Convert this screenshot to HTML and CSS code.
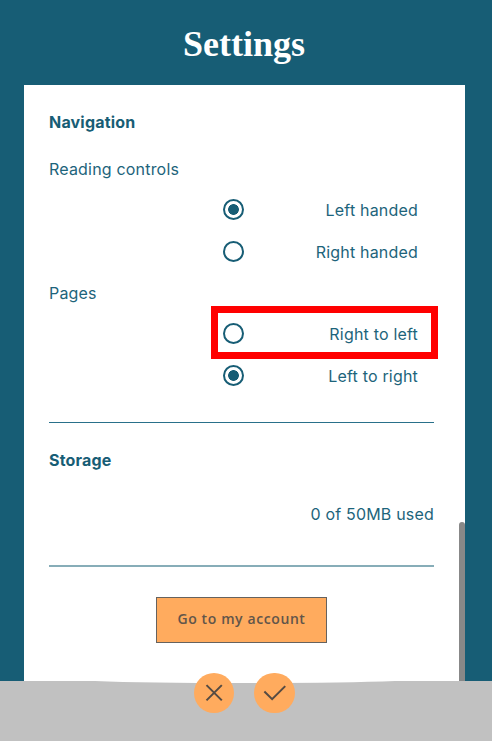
FILE: index.html
```html
<!DOCTYPE html>
<html lang="en">
<head>
<meta charset="utf-8">
<title>Settings</title>
<link rel="stylesheet" href="styles.css">
</head>
<body>
<div class="app">
  <h1 class="title">Settings</h1>
  <main class="panel">
    <h2 class="heading">Navigation</h2>
    <p class="label">Reading controls</p>
    <div class="options">
      <div class="option"><span class="radio checked"></span><span>Left handed</span></div>
      <div class="option"><span class="radio"></span><span>Right handed</span></div>
    </div>
    <p class="label pages">Pages</p>
    <div class="options">
      <div class="option highlighted"><span class="radio"></span><span>Right to left</span></div>
      <div class="option"><span class="radio checked"></span><span>Left to right</span></div>
    </div>
    <div class="rule"></div>
    <h2 class="heading">Storage</h2>
    <p class="usage">0 of 50MB used</p>
    <div class="rule soft"></div>
    <button class="account">Go to my account</button>
    <div class="scrollbar"></div>
  </main>
  <footer class="footer">
    <svg class="curve" viewBox="0 0 300 3" preserveAspectRatio="none"><path d="M0 0H300Q250 2 150 2Q50 2 0 0Z" fill="#fff"/></svg>
    <div class="actions">
      <button class="round" aria-label="Cancel"><svg viewBox="0 0 40 40"><path d="M12.4 12L27.6 27.2M27.6 12L12.4 27.2"/></svg></button>
      <button class="round" aria-label="Confirm"><svg viewBox="0 0 40 40"><path d="M10.3 18.3L18 26L31 13"/></svg></button>
    </div>
  </footer>
</div>
</body>
</html>
```
FILE: styles.css
```css
* { box-sizing: border-box; margin: 0; padding: 0; }
body { background: #fff; overflow: hidden; }
.app {
  width: 492px;
  height: 741px;
  display: flex;
  flex-direction: column;
  background: #175d75;
  color: #1d647b;
  font: 16px/24px Inter, "Liberation Sans", sans-serif;
  letter-spacing: 0.19px;
}
.title {
  height: 85px;
  padding-top: 20px;
  flex: none;
  text-align: center;
  padding-right: 4px;
  color: #fff;
  font: bold 36px/48px "Liberation Serif", serif;
  letter-spacing: 0;
}
.panel {
  position: relative;
  width: 441px;
  height: 596px;
  flex: none;
  margin-left: 24px;
  padding: 25px 31px 0 25px;
  background: #fff;
}
.heading { font-size: 16px; line-height: 24px; font-weight: 700; color: #175d75; }
.label { margin-top: 23px; }
.label.pages { margin-top: 8px; }
.options { margin: 8px 16px 0 174px; }
.option {
  position: relative;
  height: 42px;
  display: flex;
  align-items: center;
  justify-content: space-between;
}
.radio {
  width: 21px;
  height: 21px;
  margin-bottom: 1px;
  border: 2px solid #175d75;
  border-radius: 50%;
}
.checked { background: radial-gradient(circle, #175d75 5px, transparent 5.7px); }
.highlighted::after {
  content: "";
  position: absolute;
  inset: -7px -20px -4px -12px;
  border: 7px solid #f00;
}
.rule { height: 1px; margin: 25px 0; background: #29708a; }
.rule.soft { height: 2px; margin: 39px 0 30px; background: #87adb8; }
.usage { margin-top: 30px; text-align: right; }
.account {
  display: block;
  width: 171px;
  height: 46px;
  margin-left: 107px;
  padding-bottom: 2px;
  border: 1px solid #66625e;
  background: #ffab5e;
  color: #62554a;
  font: 600 14px/20px "Open Sans", sans-serif;
  letter-spacing: 0.6px;
}
.scrollbar {
  position: absolute;
  right: 0;
  bottom: 0;
  width: 6px;
  height: 159px;
  border-radius: 3px 3px 0 0;
  background: #888;
}
.footer { position: relative; height: 60px; background: #c1c1c1; }
.curve { position: absolute; left: 95px; top: 0; width: 300px; height: 3px; }
.actions {
  position: relative;
  display: flex;
  gap: 20px;
  margin-left: 194px;
  top: -8px;
}
.round {
  width: 40.3px;
  height: 40.3px;
  border: 0;
  border-radius: 50%;
  background: #ffab5e;
}
.round svg {
  display: block;
  width: 100%;
  height: 100%;
  fill: none;
  stroke: #554b43;
  stroke-width: 2;
}
```
